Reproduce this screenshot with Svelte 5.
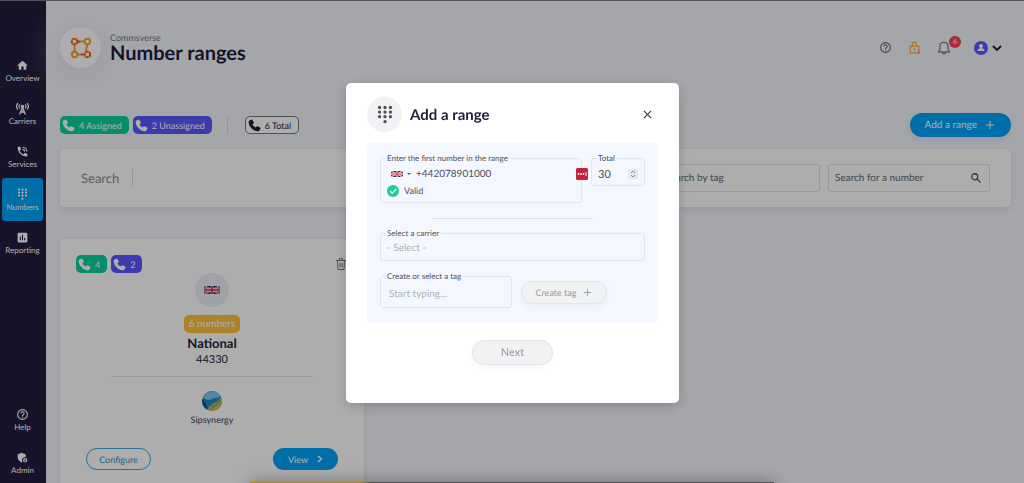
<script>
  const navTop = [
    { id: 'home', label: 'Overview' },
    { id: 'tower', label: 'Carriers' },
    { id: 'call', label: 'Services' },
    { id: 'pad', label: 'Numbers', active: true },
    { id: 'chart', label: 'Reporting' }
  ];
  const navBottom = [
    { id: 'help', label: 'Help' },
    { id: 'shield', label: 'Admin' }
  ];
  let phone = $state('+442078901000');
  let total = $state(30);
  let tag = $state('');
</script>

{#snippet handset()}
  <svg class="handset" viewBox="0 0 24 24" aria-hidden="true"><path d="M6.200 1.200 2.600 2.900C1.400 3.600 1 5 1.200 6.600 2.400 15 9 21.600 17.400 22.800c1.600.2 3-.2 3.700-1.400l1.800-3.500c.4-.8.100-1.700-.6-2.100l-4.500-2.400c-.7-.4-1.500-.2-2 .4l-1.700 2C11.400 14.500 9.500 12.600 8.200 9.900l2-1.700c.6-.5.8-1.300.5-2L8.300 1.800c-.4-.7-1.300-1-2.100-.6z" fill="currentColor" /></svg>
{/snippet}

{#snippet flag()}
  <svg class="flag" viewBox="0 0 24 12" preserveAspectRatio="none" aria-hidden="true">
    <rect width="24" height="12" fill="#1d2b6b" />
    <path d="M0 0 24 12M24 0 0 12" stroke="#fff" stroke-width="2.600" />
    <path d="M0 0 24 12M24 0 0 12" stroke="#d8203c" stroke-width="1" />
    <path d="M12 0v12M0 6h24" stroke="#fff" stroke-width="4.200" />
    <path d="M12 0v12M0 6h24" stroke="#d8203c" stroke-width="2.400" />
  </svg>
{/snippet}

{#snippet icon(id)}
  <svg class="icon" viewBox="0 0 24 24" fill="currentColor" aria-hidden="true">
    {#if id === 'home'}
      <path d="M10 20v-6h4v6h5v-8h3L12 3 2 12h3v8z" />
    {:else if id === 'tower'}
      <path d="M12 5a3.200 3.200 0 0 0-1.900 5.800L5.500 23h2.700l.9-2.500h5.800l.9 2.500h2.700l-4.600-12.200A3.200 3.200 0 0 0 12 5zm0 8.500.9 2.500h-1.800zM10.400 17.800h3.200l.5 1.200H9.900z" />
      <path d="M7 4.500c-1.800 2.300-1.800 5.200 0 7.500M17 4.500c1.800 2.300 1.800 5.200 0 7.500M3.500 2C.6 5.600.6 10.400 3.500 14M20.500 2c2.900 3.600 2.900 8.400 0 12" fill="none" stroke="currentColor" stroke-width="2.200" />
    {:else if id === 'call'}
      <path d="M20 15.500c-1.250 0-2.450-.2-3.570-.57a1 1 0 0 0-1.020.24l-2.200 2.200a15 15 0 0 1-6.590-6.580l2.200-2.210a1 1 0 0 0 .25-1.010A11.400 11.400 0 0 1 8.500 4a1 1 0 0 0-1-1H4a1 1 0 0 0-1 1c0 9.390 7.610 17 17 17a1 1 0 0 0 1-1v-3.500a1 1 0 0 0-1-1zM19 12h2a9 9 0 0 0-9-9v2a7 7 0 0 1 7 7zm-4 0h2a5 5 0 0 0-5-5v2a3 3 0 0 1 3 3z" />
    {:else if id === 'pad'}
      {#each [3, 8.500, 14] as y}
        {#each [5.500, 12, 18.500] as x}<circle cx={x} cy={y} r="2" />{/each}
      {/each}
      <circle cx="12" cy="20" r="2" />
    {:else if id === 'chart'}
      <path d="M19 3H5a2 2 0 0 0-2 2v14a2 2 0 0 0 2 2h14a2 2 0 0 0 2-2V5a2 2 0 0 0-2-2zM9 17H7v-7h2zm4 0h-2V7h2zm4 0h-2v-4h2z" />
    {:else if id === 'help'}
      <path d="M11 18h2v-2h-2zm1-16a10 10 0 1 0 0 20 10 10 0 0 0 0-20zm0 18a8 8 0 1 1 0-16 8 8 0 0 1 0 16zm0-14a4 4 0 0 0-4 4h2a2 2 0 1 1 4 0c0 2-3 1.750-3 5h2c0-2.250 3-2.500 3-5a4 4 0 0 0-4-4z" />
    {:else if id === 'shield'}
      <path d="M17 11c.340 0 .670.040 1 .090V6.270L10.500 3 3 6.270v4.910c0 4.540 3.200 8.790 7.500 9.820.550-.130 1.080-.320 1.600-.550A6 6 0 0 1 17 11z" />
      <path d="M17 13a4 4 0 1 0 0 8 4 4 0 0 0 0-8zm0 1.400a1.100 1.100 0 1 1 0 2.200 1.100 1.100 0 0 1 0-2.200zm0 5.400c-.9 0-1.700-.5-2.200-1.200.1-.7 1.500-1.100 2.200-1.100s2.100.4 2.200 1.100c-.5.700-1.300 1.200-2.200 1.200z" />
    {/if}
  </svg>
{/snippet}

<div class="app">
  <nav class="sidebar" aria-label="Main">
    {#each navTop as item}
      <a href="#{item.id}" class="nav" class:active={item.active}>{@render icon(item.id)}<span>{item.label}</span></a>
    {/each}
    <div class="spacer"></div>
    {#each navBottom as item}
      <a href="#{item.id}" class="nav">{@render icon(item.id)}<span>{item.label}</span></a>
    {/each}
  </nav>

  <main>
    <header class="top">
      <div class="brand">
        <svg viewBox="0 0 24 24" fill="none" stroke-width="2" aria-hidden="true">
          <g stroke="#f3a52b" stroke-width="2.200"><path d="M8 5h8M5 8v8M19 8c0 3-2 4-1.500 8M8 19h8" /><circle cx="19" cy="5" r="3" /><circle cx="5" cy="19" r="3" /><circle cx="5" cy="5" r="3" /><circle cx="19" cy="19" r="3" /></g>
          <g stroke="#f2453d" stroke-dasharray="2 2"><circle cx="5" cy="5" r="3" /><circle cx="19" cy="19" r="3" /><path d="M9 5h3M12 19h4" /></g>
        </svg>
      </div>
      <div class="titles">
        <p>Commsverse</p>
        <h1>Number ranges</h1>
      </div>
      <div class="tools">
        <button class="tool" aria-label="Help">{@render icon('help')}</button>
        <button class="tool lock" aria-label="Security">
          <svg viewBox="0 0 24 24" fill="none" stroke="currentColor" stroke-width="2.200" aria-hidden="true"><rect x="4" y="9.500" width="16" height="12.500" /><path d="M8 9.500V6a4 4 0 0 1 8 0v3.500" /><circle cx="12" cy="15.500" r="1" /><path d="M20 17v5h-2" stroke="#f2453d" stroke-dasharray="2 2" /></svg>
        </button>
        <button class="tool bell" aria-label="Notifications">
          <svg viewBox="0 0 24 24" fill="none" stroke="currentColor" stroke-width="1.800" stroke-linejoin="round" aria-hidden="true"><path d="M12 2a7 7 0 0 0-7 7v5.500L2.500 19h19L19 14.500V9a7 7 0 0 0-7-7zM9.500 19.500a2.500 2.500 0 0 0 5 0" /></svg>
          <span class="badge">6</span>
        </button>
        <button class="tool user" aria-label="Account">
          <svg class="avatar" viewBox="0 0 14 14" aria-hidden="true"><circle cx="7" cy="7" r="7" fill="#5858ff" /><circle cx="7" cy="5" r="2" fill="#fff" /><path d="M3.500 10c0-2 1.500-3 3.500-3s3.500 1 3.500 3z" fill="#fff" /></svg>
          <svg class="chev" viewBox="0 0 10 6" fill="none" stroke="currentColor" stroke-width="1.800" aria-hidden="true"><path d="m1 1 4 4 4-4" /></svg>
        </button>
      </div>
    </header>

    <div class="bar">
      <span class="chip green">{@render handset()}4 Assigned</span>
      <span class="chip purple">{@render handset()}2 Unassigned</span>
      <i class="rule"></i>
      <span class="chip outline">{@render handset()}6 Total</span>
      <button class="add">Add a range
        <svg viewBox="0 0 10 10" stroke="currentColor" aria-hidden="true"><path d="M5 1v8M1 5h8" /></svg>
      </button>
    </div>

    <section class="search">
      <h2>Search</h2>
      <i class="rule"></i>
      <div class="box tagbox"><input aria-label="Search by tag" placeholder="Search by tag" /></div>
      <div class="box"><input aria-label="Search for a number" placeholder="Search for a number" />
        <svg viewBox="0 0 24 24" fill="none" stroke="currentColor" stroke-width="2.600" aria-hidden="true"><circle cx="9.500" cy="9.500" r="6" /><path d="m14 14 7 7" /></svg>
      </div>
    </section>

    <article class="card">
      <div class="cardtop">
        <span class="chip green">{@render handset()}4</span>
        <span class="chip purple">{@render handset()}2</span>
        <button class="trash" aria-label="Delete range">
          <svg viewBox="0 0 10 12" fill="none" stroke="currentColor" aria-hidden="true"><path d="M0 2.500h10M3.500 2.500v-2h3v2M1.500 2.500l.5 9h6l.5-9M4 5v4.500M6 5v4.500" /></svg>
        </button>
      </div>
      <div class="country">{@render flag()}</div>
      <span class="count">6 numbers</span>
      <h3>National</h3>
      <p class="code">44330</p>
      <hr />
      <svg class="globe" viewBox="0 0 20 20" aria-hidden="true">
        <circle cx="10" cy="10" r="10" fill="#2388c9" />
        <path d="M1 6.500A10 10 0 0 1 18.500 5C16 8 13 6 10 8S4 9 1 6.500z" fill="#7bc6ea" />
        <path d="M19.500 7c-3 0-3 4-6 4.500S10 15 7 15.500l-1 3.600A10 10 0 0 0 19.500 7z" fill="#e0b24a" />
        <path d="M18.500 9c-2 1-2 4-5 5s-3 3-5 5" fill="none" stroke="#42b889" stroke-width="1.500" />
        <path d="M.5 8c3 3 4 5 4.500 10.500A10 10 0 0 1 .5 8z" fill="#0f4f94" />
      </svg>
      <p class="carrier">Sipsynergy</p>
      <div class="actions">
        <button class="configure">Configure</button>
        <button class="view">View
          <svg viewBox="0 0 6 8" fill="none" stroke="currentColor" stroke-width="1.400" aria-hidden="true"><path d="m1 1 3.500 3L1 7" /></svg>
        </button>
      </div>
    </article>
  </main>
</div>

<div class="toast"></div>

<div class="overlay">
  <form class="modal" role="dialog" aria-modal="true" aria-labelledby="dlg" onsubmit={(e) => e.preventDefault()}>
    <div class="head">
      <div class="padicon">{@render icon('pad')}</div>
      <h2 id="dlg">Add a range</h2>
      <button type="button" class="close" aria-label="Close">
        <svg viewBox="0 0 10 10" stroke="currentColor" stroke-width="1.400" aria-hidden="true"><path d="m1 1 8 8M9 1 1 9" /></svg>
      </button>
    </div>

    <div class="panel">
      <div class="row">
        <fieldset class="first">
          <legend><label for="phone">Enter the first number in the range</label></legend>
          <div class="phone">
            <button type="button" class="dial" aria-label="Country: United Kingdom">{@render flag()}<i></i></button>
            <input id="phone" type="tel" bind:value={phone} />
          </div>
          <div class="valid">
            <svg viewBox="0 0 12 12" aria-hidden="true"><circle cx="6" cy="6" r="6" fill="#1fcb9b" /><path d="m3 6.300 2.200 2L9.200 4" fill="none" stroke="#fff" stroke-width="1.200" /></svg>
            Valid
          </div>
          <button type="button" class="vault" aria-label="Fill from vault">
            <svg viewBox="0 0 12 12" aria-hidden="true"><rect width="12" height="12" rx="1.500" fill="#c32340" /><circle cx="2.500" cy="6" r=".9" fill="#fff" /><circle cx="5" cy="6" r=".9" fill="#fff" /><circle cx="7.500" cy="6" r=".9" fill="#fff" /><path d="M10 4v4" stroke="#fff" stroke-width=".9" /></svg>
          </button>
        </fieldset>
        <fieldset class="total">
          <legend><label for="total">Total</label></legend>
          <div class="phone">
            <input id="total" type="number" bind:value={total} />
            <svg class="spin" viewBox="0 0 10 10" aria-hidden="true"><rect width="10" height="10" fill="#e6e7ea" /><path d="m3 4 2-2 2 2M3 6l2 2 2-2" fill="none" stroke="#8b8d92" /></svg>
          </div>
        </fieldset>
      </div>

      <hr />

      <fieldset class="carrierfield">
        <legend><label for="carrier">Select a carrier</label></legend>
        <select id="carrier"><option>- Select -</option></select>
      </fieldset>

      <div class="row tagrow">
        <fieldset class="tagfield">
          <legend><label for="tag">Create or select a tag</label></legend>
          <input id="tag" placeholder="Start typing..." bind:value={tag} />
        </fieldset>
        <button type="button" class="ghost create">Create tag
          <svg viewBox="0 0 10 10" stroke="currentColor" aria-hidden="true"><path d="M5 1v8M1 5h8" /></svg>
        </button>
      </div>
    </div>

    <button class="ghost next">Next</button>
  </form>
</div>

<style>
  :global(body) { margin: 0; overflow: hidden; background: #f3f5fb; }
  :global(#app) { font-family: Lato, "Open Sans", sans-serif; color: #211d3b; text-rendering: geometricPrecision; }
  * { box-sizing: border-box; }
  h1, h2, h3, p { margin: 0; }
  button, input, select { font: inherit; color: inherit; text-rendering: inherit; border: 0; padding: 0; background: none; outline: 0; min-width: 0; }
  svg { display: block; flex: none; }

  .app { display: flex; min-height: 100vh; border-top: 1px solid #7e7d88; }
  .sidebar { width: 46px; height: 100vh; flex: none; display: flex; flex-direction: column; align-items: center; background: #231d3c; padding-top: 48px; }
  .nav { width: 41px; height: 43px; flex: none; margin-right: 1px; border-radius: 3px; display: flex; flex-direction: column; align-items: center; gap: 1px; padding-top: 10px; color: #fff; text-decoration: none; font-size: 8px; line-height: 10px; }
  .nav .icon { width: 13px; height: 13px; }
  .nav.active { background: #00a2f8; }
  .spacer { flex: 1; }

  main { flex: 1; min-width: 0; padding: 26px 13px 16px 14px; }
  .top { display: flex; align-items: center; }
  .brand { width: 41px; height: 41px; border-radius: 50%; background: #fff; display: grid; place-items: center; box-shadow: 0 6px 30px #dfe1e8; }
  .brand svg { width: 22px; height: 22px; }
  .titles { margin-left: 9px; }
  .titles p { font-size: 9px; line-height: 10px; color: #77767f; }
  h1 { font-size: 20px; line-height: 20px; }
  .tools { margin-left: auto; display: flex; align-items: center; gap: 16px; margin-right: 9px; color: #66666c; }
  .tool { display: flex; align-items: center; position: relative; }
  .tool svg { width: 13px; height: 13px; }
  .lock { color: #f9b233; }
  .bell { margin-right: 7px; }
  .bell svg { width: 14px; height: 14px; }
  .badge { position: absolute; left: 12px; top: -5px; width: 12px; height: 12px; border-radius: 50%; background: #ff3d5e; color: #fff; font-size: 7px; line-height: 12px; text-align: center; }
  .user { gap: 4px; color: #1d1933; }
  .user .avatar { width: 14px; height: 14px; }
  .user .chev { width: 10px; height: 6px; }

  .bar { display: flex; align-items: center; margin-top: 45px; gap: 4px; }
  .chip { height: 18px; display: inline-flex; align-items: center; gap: 4px; padding: 0 7px 0 2px; border-radius: 5px; font-size: 9px; color: #fff; }
  .handset { width: 13px; height: 13px; }
  .green { background: #0ad29c; }
  .purple { background: #5858ff; }
  .outline { border: 1px solid #77767f; color: #211d3b; background: #fff; }
  .rule { width: 1px; height: 18px; background: #d9dbe2; flex: none; }
  .bar .rule { margin: 0 13px 0 11px; }
  .add, .view { background: #00a2f8; color: #fff; }
  .add { margin-left: auto; height: 24px; border-radius: 12px; padding: 0 16px 0 15px; display: flex; align-items: center; gap: 8px; font-size: 10px; box-shadow: 0 3px 8px #dfe3ef; }
  .add svg { width: 10px; height: 10px; }

  .search { margin-top: 12px; height: 58px; display: flex; align-items: center; background: #fff; border-radius: 5px; padding: 0 21px; box-shadow: 0 2px 6px #dcdfe8; }
  .search h2 { font-size: 13px; font-weight: 400; color: #8b8b90; }
  .search .rule { margin-left: 13px; }
  .box { width: 162px; height: 28px; display: flex; align-items: center; border: 1px solid #e0e1e7; border-radius: 3px; padding: 0 7px 0 6px; margin-left: 8px; font-size: 10px; }
  .tagbox { margin-left: auto; }
  .box input { flex: 1; }
  .box input::placeholder { color: #63636b; opacity: 1; }
  .box svg { width: 12px; height: 12px; color: #55555c; }

  .card { margin-top: 32px; width: 304px; min-height: 250px; background: #fff; border-radius: 5px; box-shadow: 0 2px 6px #dcdfe8; padding: 16px; display: flex; flex-direction: column; align-items: center; }
  .cardtop { align-self: stretch; display: flex; gap: 4px; align-items: center; padding-right: 2px; }
  .trash { margin-left: auto; color: #77767f; }
  .trash svg { width: 10px; height: 12px; }
  .country { width: 34px; height: 34px; border-radius: 50%; background: #edeff6; display: grid; place-items: center; }
  .country .flag { width: 16px; height: 8px; }
  .count { margin-top: 8px; height: 18px; line-height: 18px; border-radius: 5px; background: #ffc038; color: #fff; font-size: 10px; padding: 0 5px; }
  h3 { font-size: 13px; line-height: 20px; }
  .code { font-size: 11px; line-height: 14px; }
  .card hr { width: 202px; border: 0; border-top: 1px solid #e2e2e8; margin: 9px 0 14px; }
  .globe { width: 20px; height: 20px; }
  .carrier { margin-top: 3px; font-size: 9px; line-height: 12px; color: #45434f; }
  .actions { align-self: stretch; display: flex; justify-content: space-between; margin-top: 22px; padding: 0 10px; }
  .configure, .view { width: 65px; height: 22px; border-radius: 11px; font-size: 9px; }
  .configure { border: 1px solid #3aa6e6; color: #2f8fca; }
  .view { display: flex; align-items: center; justify-content: center; gap: 9px; }
  .view svg { width: 6px; height: 8px; }

  .toast { position: fixed; left: 250px; right: 250px; bottom: -9px; height: 10px; background: linear-gradient(90deg, #ffc038 110px, #77777d 120px); box-shadow: 0 0 16px rgba(60, 60, 70, .5); }

  .overlay { position: fixed; inset: 0; background: rgba(0, 0, 0, .32); display: flex; align-items: center; justify-content: center; padding: 3px 0 0 1px; }
  .modal { width: 333px; background: #fff; border-radius: 5px; padding: 14px 21px 38px; box-shadow: 0 3px 12px rgba(0, 0, 0, .2); display: flex; flex-direction: column; align-items: center; }
  .head { align-self: stretch; display: flex; align-items: center; }
  .padicon { width: 35px; height: 35px; border-radius: 50%; background: #f1f2f4; display: grid; place-items: center; color: #505056; }
  .padicon .icon { width: 20px; height: 20px; }
  .head h2 { font-size: 15px; margin-left: 8px; }
  .close { margin-left: auto; padding: 6px; color: #3d3d44; }
  .close svg { width: 9px; height: 9px; }

  .panel { align-self: stretch; margin-top: 11px; background: #f4f7fe; border-radius: 5px; padding: 10px 13px 15px; color: #4f4f57; }
  .row { display: flex; align-items: flex-start; gap: 9px; }
  fieldset { margin: 0; min-width: 0; border: 1px solid #e4e5e8; border-radius: 3px; padding: 0 6px; position: relative; }
  legend { padding: 0 2px; margin-left: -2px; font-size: 8px; line-height: 10px; }
  legend label { display: block; }
  .first { flex: 1; height: 50px; }
  .total { width: 54px; height: 33px; }
  .phone { display: flex; align-items: center; height: 22px; font-size: 11px; }
  .phone input { flex: 1; width: 100%; }
  #phone { font-size: 10px; }
  .dial { display: flex; align-items: center; gap: 4px; margin: 0 5px 0 4px; }
  .dial .flag { width: 12px; height: 6px; }
  .dial i { border: 2px solid transparent; border-top-color: #55555c; border-bottom: 0; }
  .valid { display: flex; align-items: center; gap: 5px; font-size: 9px; line-height: 12px; }
  .valid svg { width: 12px; height: 12px; }
  .vault { position: absolute; right: -7px; top: 5px; }
  .vault svg { width: 12px; height: 12px; }
  #total { appearance: textfield; }
  #total::-webkit-inner-spin-button { display: none; }
  .spin { width: 10px; height: 10px; }
  .panel hr { width: 160px; border: 0; border-top: 1px solid #dfe0e4; margin: 15px auto 9px; }
  .carrierfield { height: 33px; }
  select { appearance: none; display: block; width: 100%; height: 20px; font-size: 10px; color: #b0b1b7; }
  .tagrow { margin-top: 10px; align-items: flex-end; }
  .tagfield { width: 132px; height: 37px; }
  .tagfield input { display: block; width: 100%; height: 25px; font-size: 10px; padding-left: 2px; }
  .tagfield input::placeholder { color: #b0b1b7; opacity: 1; }
  .ghost { background: #f1f2f4; border: 1px solid #e3e4e7; color: #96979c; box-shadow: 0 3px 6px rgba(0, 0, 0, .04); }
  .create { width: 86px; height: 23px; margin-bottom: 4px; border-radius: 12px; font-size: 9px; display: flex; align-items: center; justify-content: center; gap: 7px; }
  .create svg { width: 9px; height: 9px; }
  .next { margin-top: 17px; width: 81px; height: 25px; border-radius: 13px; font-size: 11px; }
</style>
